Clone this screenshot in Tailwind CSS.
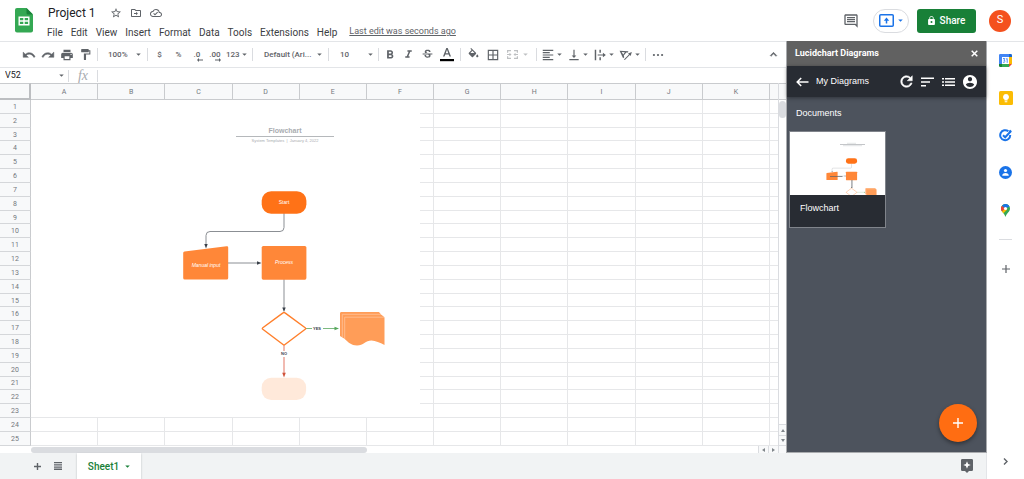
<!DOCTYPE html>
<html lang="en">
<head>
<meta charset="utf-8">
<meta name="viewport" content="width=device-width, initial-scale=1">
<title>Project 1</title>
<script src="https://cdn.jsdelivr.net/npm/@tailwindcss/browser@4"></script>
</head>
<body class="flex h-screen flex-col overflow-hidden bg-white font-['Roboto',sans-serif] text-[#3c4043]">

<svg class="hidden">
  <symbol id="caret" viewBox="0 0 6 4"><path d="M0 .5h6L3 3.5z"/></symbol>
</svg>

<header class="flex h-[42px] shrink-0 items-center border-b border-[#e3e5e8]">
  <a href="#" aria-label="Sheets home" class="ml-[15px] block">
    <svg class="h-[25px] w-[18px]" viewBox="0 0 18 25"><path fill="#34a853" d="M2 0h9.500L18 6.500V22.500a2 2 0 0 1-2 2H2a2 2 0 0 1-2-2V2a2 2 0 0 1 2-2z"/><path fill="#188038" d="M11.500 0 18 6.500h-5a1.500 1.500 0 0 1-1.500-1.500z"/><path fill="#fff" fill-rule="evenodd" d="M3.500 8.500h11v9h-11zM4.900 9.900v2.400h3.400V9.900zm4.800 0v2.400h3.400V9.900zm-4.800 3.800v2.400h3.400v-2.400zm4.800 0v2.400h3.400v-2.400z"/></svg>
  </a>
  <div class="ml-[14px] flex min-w-0 flex-1 flex-col gap-[2px] pt-[2px]">
    <div class="flex h-[19px] items-center pl-px">
      <h1 class="text-[12px] text-[#202124]">Project 1</h1>
      <button aria-label="Star" class="ml-[14px]"><svg class="size-3" viewBox="0 0 24 24" fill="#5f6368"><path d="M22 9.240l-7.190-.62L12 2 9.190 8.630 2 9.240l5.460 4.730L5.820 21 12 17.270 18.180 21l-1.630-7.030L22 9.240zM12 15.400l-3.760 2.270 1-4.280-3.320-2.880 4.380-.38L12 6.100l1.710 4.040 4.380.38-3.320 2.880 1 4.280L12 15.400z"/></svg></button>
      <button aria-label="Move" class="ml-2"><svg class="size-3" viewBox="0 0 24 24" fill="#5f6368"><path d="M20 6h-8l-2-2H4c-1.100 0-2 .9-2 2v12c0 1.100.9 2 2 2h16c1.100 0 2-.9 2-2V8c0-1.100-.9-2-2-2zm0 12H4V6h5.200l2 2H20v10zM12.200 9.500l3.600 3.500-3.600 3.500v-2.500H8v-2h4.200z"/></svg></button>
      <button aria-label="Saved to Drive" class="ml-2"><svg class="size-3" viewBox="0 0 24 24" fill="#5f6368"><path d="M19.350 10.040A7.490 7.490 0 0 0 12 4C9.110 4 6.600 5.640 5.350 8.040A5.994 5.994 0 0 0 0 14c0 3.310 2.690 6 6 6h13c2.760 0 5-2.240 5-5 0-2.640-2.050-4.780-4.650-4.960zM19 18H6c-2.210 0-4-1.790-4-4 0-2.050 1.530-3.760 3.560-3.970l1.070-.11.5-.95A5.469 5.469 0 0 1 12 6c2.620 0 4.880 1.860 5.390 4.430l.3 1.500 1.530.11A2.980 2.980 0 0 1 22 15c0 1.650-1.350 3-3 3zm-9-3.820-2.090-2.090L6.500 13.500 10 17l6.010-6.010-1.410-1.410z"/></svg></button>
    </div>
    <nav class="flex h-4 items-center gap-2 text-[10px] whitespace-nowrap">
      <button>File</button><button>Edit</button><button>View</button><button>Insert</button><button>Format</button><button>Data</button><button>Tools</button><button>Extensions</button><button>Help</button>
      <a href="#" class="ml-1 text-[9px] text-[#5f6368] underline">Last edit was seconds ago</a>
    </nav>
  </div>
  <div class="flex items-center pr-[13px]">
    <button aria-label="Comments"><svg class="size-4" viewBox="0 0 24 24" fill="#5f6368"><path d="M21.990 4c0-1.100-.89-2-1.990-2H4c-1.100 0-2 .9-2 2v12c0 1.100.9 2 2 2h14l4 4-.01-18zM20 4v13.170L18.830 16H4V4h16zM6 12h12v2H6zm0-3h12v2H6zm0-3h12v2H6z"/></svg></button>
    <button aria-label="Present" class="ml-[14px] flex h-6 w-9 items-center justify-center gap-1 rounded-full border border-[#dadce0]">
      <svg class="h-[13px] w-[15px]" viewBox="0 0 15 13" fill="none" stroke="#1a73e8" stroke-width="1.500"><rect x=".75" y=".75" width="13.500" height="11.500" rx="1"/><path d="M7.500 9.500V5.500" /><path d="M4.800 6.700 7.500 3.500l2.700 3.200z" fill="#1a73e8" stroke="none"/></svg>
      <svg class="h-[3px] w-[5px]" fill="#1a73e8"><use href="#caret"/></svg>
    </button>
    <button class="ml-2 flex h-6 w-[59px] items-center justify-center gap-[5px] rounded-[3px] bg-[#188038] text-[10px] font-medium text-white">
      <svg class="h-[9px] w-[7px]" viewBox="4 1 16 21" fill="#fff"><path d="M18 8h-1V6c0-2.760-2.240-5-5-5S7 3.240 7 6v2H6c-1.100 0-2 .9-2 2v10c0 1.100.9 2 2 2h12c1.100 0 2-.9 2-2V10c0-1.100-.9-2-2-2zm-6 9.500a2.300 2.300 0 1 1 0-4.600 2.300 2.300 0 0 1 0 4.600zM15.100 8H8.900V6a3.100 3.100 0 0 1 6.200 0z"/></svg>Share</button>
    <button aria-label="Account" class="ml-[13px] size-[22px] rounded-full bg-[#f4511e] text-[11px] text-white">S</button>
  </div>
</header>

<div class="flex min-h-0 flex-1">
  <div class="flex min-w-0 flex-1 flex-col">
    <div class="flex min-h-0 flex-1">
      <main class="flex min-w-0 flex-1 flex-col">

        <div role="toolbar" aria-label="Formatting" class="flex h-[26px] shrink-0 items-center border-b border-[#e3e5e8] pl-[19px] text-[8px] font-medium text-[#5f6368] [&_svg]:fill-[#5f6368]">
          <button aria-label="Undo" class="flex w-[19px] justify-center"><svg class="size-[14px]" viewBox="0 0 24 24"><path stroke="#5f6368" stroke-width=".8" d="M12.500 8c-2.650 0-5.050.99-6.900 2.600L2 7v9h9l-3.620-3.620c1.390-1.160 3.160-1.880 5.120-1.880 3.540 0 6.550 2.310 7.600 5.500l2.370-.78C21.080 11.030 17.150 8 12.500 8z"/></svg></button>
          <button aria-label="Redo" class="flex w-[19px] justify-center"><svg class="size-[14px]" viewBox="0 0 24 24"><path stroke="#5f6368" stroke-width=".8" d="M18.400 10.600C16.550 8.990 14.150 8 11.500 8c-4.650 0-8.580 3.030-9.960 7.220L3.900 16a8.002 8.002 0 0 1 7.600-5.500c1.950 0 3.730.72 5.120 1.880L13 16h9V7l-3.600 3.600z"/></svg></button>
          <button aria-label="Print" class="flex w-[19px] justify-center"><svg class="size-[14px]" viewBox="0 0 24 24"><path d="M19 8H5c-1.660 0-3 1.340-3 3v6h4v4h12v-4h4v-6c0-1.660-1.340-3-3-3zm-3 11H8v-5h8v5zm3-7c-.55 0-1-.45-1-1s.45-1 1-1 1 .45 1 1-.45 1-1 1zm-1-9H6v4h12V3z"/></svg></button>
          <button aria-label="Paint format" class="flex w-[19px] justify-center"><svg class="size-[13px]" viewBox="0 0 24 24"><path d="M18 4V3c0-.55-.45-1-1-1H5c-.55 0-1 .45-1 1v4c0 .55.45 1 1 1h12c.55 0 1-.45 1-1V6h1v4H9v11c0 .55.45 1 1 1h2c.55 0 1-.45 1-1v-9h8V4h-3z"/></svg></button>
          <span class="ml-[2px] h-[13px] w-px bg-[#dadce0]"></span>
          <button class="flex w-[49px] items-center justify-between pr-[6px] pl-[10px]">100%<svg class="h-[3px] w-[5px]"><use href="#caret"/></svg></button>
          <span class="h-[13px] w-px bg-[#dadce0]"></span>
          <button class="ml-[2px] w-[19px]">$</button>
          <button class="w-[19px]">%</button>
          <button aria-label="Decrease decimal places" class="relative w-[18px]">.0<svg class="absolute top-[9px] left-[9px] h-1 w-[6px]" viewBox="0 0 6 4"><path d="M0 2 2 0v1.500h4v1H2V4z"/></svg></button>
          <button aria-label="Increase decimal places" class="relative w-[18px]">.00<svg class="absolute top-[9px] left-[9px] h-1 w-[6px]" viewBox="0 0 6 4"><path d="M6 2 4 0v1.500H0v1h4V4z"/></svg></button>
          <button class="ml-[2px] flex w-[26px] items-center gap-[2px]">123<svg class="h-[3px] w-[5px]"><use href="#caret"/></svg></button>
          <span class="h-[13px] w-px bg-[#dadce0]"></span>
          <button class="flex w-[75px] items-center justify-between pr-[6px] pl-[11px] whitespace-nowrap">Default (Ari...<svg class="h-[3px] w-[5px]"><use href="#caret"/></svg></button>
          <span class="h-[13px] w-px bg-[#dadce0]"></span>
          <button class="flex w-[49px] items-center justify-between pr-[5px] pl-[11px]">10<svg class="h-[3px] w-[5px]"><use href="#caret"/></svg></button>
          <span class="h-[13px] w-px bg-[#dadce0]"></span>
          <button aria-label="Bold" class="ml-px flex w-[19px] justify-center"><svg class="size-[14px]" viewBox="0 0 24 24"><path d="M15.600 10.790c.97-.67 1.650-1.770 1.650-2.790 0-2.260-1.750-4-4-4H7v14h7.040c2.090 0 3.710-1.700 3.710-3.790 0-1.520-.86-2.820-2.150-3.420zM10 6.500h3c.83 0 1.500.67 1.500 1.500s-.67 1.500-1.500 1.500h-3v-3zm3.500 9H10v-3h3.500c.83 0 1.500.67 1.500 1.500s-.67 1.500-1.500 1.500z"/></svg></button>
          <button aria-label="Italic" class="flex w-[19px] justify-center"><svg class="size-[13px]" viewBox="0 0 24 24"><path d="M10 4v3h2.210l-3.420 8H6v3h8v-3h-2.210l3.420-8H18V4z"/></svg></button>
          <button aria-label="Strikethrough" class="flex w-[19px] justify-center"><svg class="size-[13px]" viewBox="0 0 24 24"><path d="M7.240 8.750c-.26-.48-.39-1.030-.39-1.670 0-.61.13-1.160.4-1.670.26-.5.630-.93 1.110-1.290.48-.35 1.050-.63 1.700-.83.66-.19 1.390-.29 2.180-.29.81 0 1.540.11 2.210.34.66.22 1.230.54 1.690.94.47.4.83.88 1.080 1.430s.38 1.150.38 1.810h-3.010c0-.31-.05-.59-.15-.85-.09-.27-.24-.49-.44-.68-.2-.19-.45-.33-.75-.44-.3-.1-.66-.16-1.060-.16-.39 0-.74.04-1.030.13s-.53.21-.72.36c-.19.16-.34.34-.44.55-.1.210-.15.43-.15.66 0 .48.25.88.74 1.210.38.250.770.480 1.410.7H7.390c-.05-.08-.11-.17-.15-.25zM21 12v-2H3v2h9.620c.18.070.4.140.55.200.37.170.66.340.87.510s.35.360.43.570c.07.200.11.430.11.690 0 .23-.05.450-.14.660-.09.200-.23.380-.42.530-.19.150-.42.260-.71.350-.29.080-.63.130-1.010.13-.43 0-.83-.04-1.180-.13s-.66-.23-.91-.42c-.25-.19-.45-.44-.59-.75s-.25-.76-.25-1.210H6.400c0 .55.080 1.130.24 1.580s.37.850.65 1.210c.28.350.6.660.98.920.37.260.780.480 1.220.650.440.170.900.300 1.380.390.480.080.960.130 1.440.130.800 0 1.530-.09 2.180-.28s1.210-.45 1.670-.79c.46-.34.820-.77 1.070-1.270s.38-1.070.38-1.710c0-.6-.1-1.140-.31-1.610-.05-.11-.11-.23-.17-.33H21z"/></svg></button>
          <button aria-label="Text color" class="flex w-[19px] justify-center"><svg class="h-[15px] w-[14px]" viewBox="0 0 14 15"><path d="M6.300 1h1.400l3.300 8.500H9.500L8.700 7.400H5.300L4.500 9.500H3zM5.750 6.200h2.500L7 2.700z"/><path fill="#000" d="M0 12h14v2.200H0z"/></svg></button>
          <span class="ml-1 h-[13px] w-px bg-[#dadce0]"></span>
          <button aria-label="Fill color" class="ml-[2px] flex w-5 justify-center"><svg class="size-[13px]" viewBox="0 0 24 24"><path d="M16.560 8.940 7.620 0 6.210 1.410l2.380 2.380-5.150 5.150c-.59.590-.59 1.540 0 2.120l5.500 5.500c.29.290.68.440 1.060.440s.77-.15 1.060-.44l5.500-5.500c.59-.58.590-1.530 0-2.120zM19 11.500s-2 2.170-2 3.500c0 1.100.9 2 2 2s2-.9 2-2c0-1.330-2-3.500-2-3.500zM6.300 9 10 5.300 13.700 9z" fill-rule="evenodd"/></svg></button>
          <button aria-label="Borders" class="flex w-5 justify-center"><svg class="size-[14px]" viewBox="0 0 24 24"><path d="M3 3v18h18V3H3zm8 16H5v-6h6v6zm0-8H5V5h6v6zm8 8h-6v-6h6v6zm0-8h-6V5h6v6z"/></svg></button>
          <button aria-label="Merge cells" disabled class="flex w-[32px] items-center gap-[4px] pl-[3px] opacity-40"><svg class="h-[11px] w-[13px]" viewBox="0 0 13 11"><path d="M1 1h4v1.200H2.200v1.500H1zM8 1h4v2.700h-1.200V2.200H8zM1 7.300h1.200v1.500H5V10H1zM10.800 7.300H12V10H8V8.800h2.800zM1 5h2.500V3.700L5.500 5.500l-2 1.800V6H1zM12 5H9.500V3.700L7.500 5.500l2 1.800V6H12z"/></svg><svg class="h-[3px] w-[5px]"><use href="#caret"/></svg></button>
          <span class="ml-px h-[13px] w-px bg-[#dadce0]"></span>
          <button aria-label="Horizontal align" class="ml-1 flex w-[26px] items-center gap-[2px]"><svg class="size-[14px]" viewBox="0 0 24 24"><path d="M15 15H3v2h12v-2zm0-8H3v2h12V7zM3 13h18v-2H3v2zm0 8h18v-2H3v2zM3 3v2h18V3H3z"/></svg><svg class="h-[3px] w-[5px]"><use href="#caret"/></svg></button>
          <button aria-label="Vertical align" class="flex w-[26px] items-center gap-[2px]"><svg class="size-[14px]" viewBox="0 0 24 24"><path d="M16 13h-3V3h-2v10H8l4 4 4-4zM4 19v2h16v-2H4z"/></svg><svg class="h-[3px] w-[5px]"><use href="#caret"/></svg></button>
          <button aria-label="Text wrapping" class="flex w-[26px] items-center gap-[2px]"><svg class="size-[14px]" viewBox="0 0 24 24"><path d="M3 3h2.500v18H3zM11 3h2.500v5H11zM11 16h2.500v5H11zM8 11h9V8l5 4-5 4v-3H8z"/></svg><svg class="h-[3px] w-[5px]"><use href="#caret"/></svg></button>
          <button aria-label="Text rotation" class="flex w-[26px] items-center gap-[2px]"><svg class="size-[14px]" viewBox="0 0 24 24"><path fill-rule="evenodd" d="M1 4.500 16 5.500 15.500 7.700 12.500 7.500 8.200 13 9 16 7 17.500zM4.500 7 7.300 11 10 7.400zM8.500 19.500l8.500-8.500-1.500-1.500L22 7l-2 6.500-1.500-1.300-8.500 8.500z"/></svg><svg class="h-[3px] w-[5px]"><use href="#caret"/></svg></button>
          <span class="h-[13px] w-px bg-[#dadce0]"></span>
          <button aria-label="More" class="ml-[5px]"><svg class="size-[14px]" viewBox="0 0 24 24"><circle cx="5" cy="12" r="1.900"/><circle cx="12" cy="12" r="1.900"/><circle cx="19" cy="12" r="1.900"/></svg></button>
          <button aria-label="Hide the menus" class="mr-[6px] ml-auto"><svg class="size-[13px]" viewBox="0 0 24 24"><path d="M12 8l-6 6 1.410 1.410L12 10.830l4.590 4.580L18 14z" stroke="#5f6368"/></svg></button>
        </div>

        <div class="flex h-[15px] shrink-0 items-center">
          <input aria-label="Name box" value="V52" class="w-[54px] pl-[5px] text-[9px] text-[#202124] outline-none">
          <button aria-label="Named ranges" class="ml-[5px]"><svg class="h-[3px] w-[5px]" fill="#5f6368"><use href="#caret"/></svg></button>
          <span class="ml-1 h-3 w-px bg-[#dadce0]"></span>
          <label for="formula" class="w-[28px] text-center font-['Liberation_Serif',serif] text-[14px] leading-3 text-[#a8abaf] italic">fx</label>
          <span class="h-3 w-px bg-[#dadce0]"></span>
          <input id="formula" class="h-full min-w-0 flex-1 px-1 text-[9px] outline-none">
        </div>

        <div class="flex min-h-0 flex-1">
          <div class="flex min-w-0 flex-1 flex-col">
            <div class="relative min-h-0 flex-1">
              <table class="h-full w-full table-fixed border-separate border-spacing-0 text-[7px] leading-none text-[#73777c]">
                <thead><tr id="columns" class="h-[17px]"><th class="w-[31px] border-t border-r-2 border-b-2 border-t-[#c9cbce] border-r-[#bcbec1] border-b-[#bcbec1] bg-[#f8f9fa] p-0"></th></tr></thead>
                <tbody id="rows"></tbody>
              </table>
              <svg class="absolute top-[17px] left-[31px] h-[317px] w-[389px] font-['Liberation_Sans',sans-serif]" viewBox="31 100 389 317" role="img" aria-label="Flowchart">
                <rect x="31" y="100" width="389" height="317" fill="#fff"/>
                <text x="285" y="133" font-size="7" font-weight="700" text-anchor="middle" fill="#a9acb0">Flowchart</text>
                <path d="M236 136.500h98" stroke="#b5b8bb"/>
                <text x="285" y="142" font-size="4" text-anchor="middle" fill="#a9acb0" xml:space="preserve">System Templates  |  January 4, 2022</text>
                <g id="flow">
                  <g fill="none" stroke="#8b8f94">
                    <path d="M284 213v14.500a4 4 0 0 1-4 4h-70a4 4 0 0 0-4 4V246"/>
                    <path d="M228 263h31M284 279v30"/>
                    <path d="M306 328.500h30" stroke="#7cba80"/>
                    <path d="M284 345v30" stroke="#eda397" stroke-width="1.500"/>
                  </g>
                  <path fill="#3a414a" d="M204.300 244h3.400L206 248.500zM257 261.300l4.500 1.700-4.500 1.700zM282.300 307.500h3.400L284 312z"/>
                  <path fill="#54a65a" d="M334.500 326.800l4.500 1.700-4.500 1.700z"/>
                  <path fill="#d0533a" d="M282.200 372.800h3.600L284 377.500z"/>
                  <rect x="261.700" y="191.300" width="44.700" height="22.400" rx="9.500" fill="#ff7217"/>
                  <path fill="#ff8738" d="M184.500 251.500l42-5.200a1.400 1.400 0 0 1 1.700 1.400V278a1.600 1.600 0 0 1-1.600 1.600H184.800a1.600 1.600 0 0 1-1.600-1.600V253a1.500 1.500 0 0 1 1.300-1.500z"/>
                  <rect x="261.700" y="246" width="44.700" height="33.700" rx="1.600" fill="#ff8738"/>
                  <path d="M283 312.900q1-.8 2 0l20.200 14.800q1 .8 0 1.600L285 344.500q-1 .8-2 0l-20.200-15.200q-1-.8 0-1.600z" fill="#fff" stroke="#ff7f2b" stroke-width="1.400"/>
                  <g fill="#ff9d58" stroke="#ffc9a3" stroke-width=".7">
                    <path stroke="none" d="M341 312h38l2 2.500 2 1.500 1.500 1.500V345q-7-4-13-4.600c-6 0-8 5-14.500 5-6 0-8-2.500-12.500-6.600l-4.500-2.800V313.500q0-1.500 1-1.500z"/>
                    <path fill="none" d="M342.300 337v-22.700h38.500M344.700 339v-21.800h39.500"/>
                  </g>
                  <rect x="261.700" y="377.700" width="44.400" height="22.300" rx="9.500" fill="#ffe9da"/>
                </g>
                <path fill="#fff" d="M312 326h11v5h-11zM279 351h10v6h-10z"/>
                <g text-anchor="middle" font-size="5">
                  <text x="284" y="204" fill="#fff">Start</text>
                  <g fill="#fff" font-style="italic"><text x="206" y="267">Manual input</text><text x="284" y="264">Process</text></g>
                  <g fill="#3a414a" font-weight="700" font-size="4"><text x="317" y="330">YES</text><text x="284" y="355">NO</text></g>
                </g>
              </svg>
            </div>
            <div class="flex h-[7px] shrink-0 items-center bg-white pl-[31px]">
              <div class="h-[6px] w-[336px] rounded-full bg-[#dadce0]"></div>
              <button aria-label="Scroll left" class="ml-auto flex h-full w-[10px] items-center justify-center border-l border-[#dadce0] bg-[#f8f9fa]"><svg class="h-1 w-[3px]" viewBox="0 0 3 4" fill="#80868b"><path d="M3 0v4L0 2z"/></svg></button>
              <button aria-label="Scroll right" class="flex h-full w-[10px] items-center justify-center border-l border-[#dadce0] bg-[#f8f9fa]"><svg class="h-1 w-[3px]" viewBox="0 0 3 4" fill="#80868b"><path d="M0 0v4l3-2z"/></svg></button>
            </div>
          </div>
          <div class="flex w-2 shrink-0 flex-col border-l border-[#dadce0]">
            <div class="h-[17px] border-y border-[#c9cbce] bg-[#f8f9fa]"></div>
            <div class="mt-px h-[17px] rounded-full bg-[#dadce0]"></div>
            <button aria-label="Scroll up" class="mt-auto flex h-[11px] items-center justify-center border-t border-[#dadce0] bg-[#f8f9fa]"><svg class="h-[3px] w-1" viewBox="0 0 4 3" fill="#80868b"><path d="M0 3h4L2 0z"/></svg></button>
            <button aria-label="Scroll down" class="flex h-[11px] items-center justify-center border-y border-[#dadce0] bg-[#f8f9fa]"><svg class="h-[3px] w-1" viewBox="0 0 4 3" fill="#80868b"><path d="M0 0h4L2 3z"/></svg></button>
            <div class="h-[7px] bg-[#f8f9fa]"></div>
          </div>
        </div>
      </main>

      <aside class="-mt-px flex w-[201px] shrink-0 flex-col border-x border-b border-[#a9abae] bg-[#4d535d] font-['Liberation_Sans',sans-serif] text-[9px] text-white">
        <div class="flex h-[25px] shrink-0 items-center justify-between bg-[#616161] pr-2 pl-2">
          <h2 class="font-['Roboto',sans-serif] font-bold">Lucidchart Diagrams</h2>
          <button aria-label="Close"><svg class="size-[7px]" viewBox="0 0 7 7" stroke="#fff" stroke-width="1.500"><path d="M.7.7l5.600 5.600M6.300.7.700 6.300"/></svg></button>
        </div>
        <div class="flex h-[31px] shrink-0 items-center bg-[#282c33] pr-[9px] pl-[9px] shadow-[0_1px_4px_rgba(0,0,0,0.4)]">
          <button aria-label="Back"><svg class="h-[10px] w-[13px]" viewBox="0 0 13 10" fill="none" stroke="#fff" stroke-width="1.500"><path d="M12.500 5H1.500M5.200 1 1.200 5l4 4"/></svg></button>
          <span class="ml-[7px]">My Diagrams</span>
          <div class="ml-auto flex items-center gap-2 [&_svg]:fill-white">
            <button aria-label="Refresh"><svg class="size-[13px]" viewBox="3 3 18 18"><path stroke="#fff" stroke-width=".7" d="M17.650 6.350A7.958 7.958 0 0 0 12 4c-4.420 0-7.990 3.580-7.990 8s3.570 8 7.990 8c3.730 0 6.840-2.550 7.730-6h-2.080A5.990 5.990 0 0 1 12 18c-3.310 0-6-2.690-6-6s2.690-6 6-6c1.660 0 3.140.69 4.220 1.780L13 11h7V4z"/></svg></button>
            <button aria-label="Sort"><svg class="h-[10px] w-[13px]" viewBox="0 0 13 10"><path d="M0 .5h13v1.600H0zM0 4.200h9v1.600H0zM0 7.900h5v1.600H0z"/></svg></button>
            <button aria-label="List view"><svg class="h-[8px] w-[13px]" viewBox="0 0 13 8"><path d="M0 0h2v1.500H0zM3 0h10v1.500H3zM0 3.200h2v1.500H0zM3 3.200h10v1.500H3zM0 6.400h2V8H0zM3 6.400h10V8H3z"/></svg></button>
            <button aria-label="Profile"><svg class="size-[14px]" viewBox="2 2 20 20"><path d="M12 2C6.480 2 2 6.480 2 12s4.480 10 10 10 10-4.480 10-10S17.520 2 12 2zm0 3c1.660 0 3 1.340 3 3s-1.340 3-3 3-3-1.340-3-3 1.340-3 3-3zm0 14.200a7.200 7.200 0 0 1-6-3.220c.03-1.990 4-3.080 6-3.080 1.990 0 5.970 1.090 6 3.080a7.200 7.200 0 0 1-6 3.220z"/></svg></button>
          </div>
        </div>
        <h3 class="mt-[9px] pl-[9px] leading-[14px]">Documents</h3>
        <a href="#" class="mt-[11px] ml-[2px] block w-[97px] border border-[#80848b] bg-[#282c33]">
          <svg class="block h-[63px] w-full bg-white" viewBox="0 0 95 63">
            <path d="M50 12.500h25" stroke="#b5b8bb" stroke-width=".8"/><path d="M57 11.300h9M53 13.700h19" stroke="#cfd1d3" stroke-width=".6"/>
            <use href="#flow" transform="translate(-9.200 -21.500) scale(.249)"/>
            <path d="M40 44.500h12.500M62 48v8" stroke="#5c6168" stroke-width=".7"/>
          </svg>
          <span class="block h-8 pt-[7px] pl-[10px] leading-[12px]">Flowchart</span>
        </a>
        <button aria-label="New document" class="mt-auto mr-[9px] mb-[10px] flex size-[38px] items-center justify-center self-end rounded-full bg-[#ff6d12] shadow-[0_2px_4px_rgba(0,0,0,0.4)]"><svg class="size-[10px]" viewBox="0 0 10 10" stroke="#fff" stroke-width="1.400"><path d="M5 0v10M0 5h10"/></svg></button>
      </aside>
    </div>

    <footer class="flex h-[26px] shrink-0 items-center border-r border-[#e3e5e8] bg-[#f1f3f4]">
      <button aria-label="Add sheet" class="ml-[34px]"><svg class="size-[7px]" viewBox="0 0 7 7" stroke="#5f6368" stroke-width="1.400"><path d="M3.500 0v7M0 3.500h7"/></svg></button>
      <button aria-label="All sheets" class="ml-[13px]"><svg class="size-2" viewBox="0 0 8 8" fill="#5f6368"><path d="M0 0h8v1.300H0zM0 2.200h8v1.300H0zM0 4.400h8v1.300H0zM0 6.600h8v1.300H0z"/></svg></button>
      <button class="ml-[15px] flex h-full w-16 items-center justify-center gap-[6px] bg-white text-[10px] font-medium text-[#188038] shadow-[0_1px_2px_rgba(60,64,67,0.3)]">Sheet1<svg class="h-[3px] w-[5px]" fill="#188038"><use href="#caret"/></svg></button>
      <button aria-label="Explore" class="mr-[13px] ml-auto"><svg class="h-[14px] w-3" viewBox="0 0 12 14"><path fill="#5f6368" d="M1.300 0h9.400A1.300 1.300 0 0 1 12 1.300v9.400a1.300 1.300 0 0 1-1.300 1.300H8l-2 2-2-2H1.300A1.300 1.300 0 0 1 0 10.700V1.300A1.300 1.300 0 0 1 1.300 0z"/><path fill="#fff" d="M6 2.200 7.100 4.900 9.800 6 7.100 7.100 6 9.800 4.900 7.100 2.200 6l2.700-1.100z"/></svg></button>
    </footer>
  </div>

  <nav aria-label="Side panel" class="flex w-[37px] shrink-0 flex-col items-center pt-3">
    <a href="#" aria-label="Calendar"><svg class="size-[13px]" viewBox="0 0 13 13"><path fill="#4285f4" d="M1.200 0H10v3H3v7H0V1.200A1.200 1.200 0 0 1 1.200 0z"/><path fill="#1967d2" d="M10 0h1.800A1.200 1.200 0 0 1 13 1.200V3h-3z"/><path fill="#fbbc04" d="M10 3h3v7h-3z"/><path fill="#34a853" d="M3 10h7v3H3z"/><path fill="#188038" d="M0 10h3v3H1.200A1.200 1.200 0 0 1 0 11.800z"/><path fill="#ea4335" d="M10 10h3l-3 3z"/><path fill="#fff" d="M3 3h7v7H3z"/><path fill="none" stroke="#4285f4" stroke-width=".9" d="M4 4.500h1.800L4.900 6.300q1.300 0 1.100 1.200Q5.400 8.700 4 8.200M7 5.200l1.200-.7v4.300"/></svg></a>
    <a href="#" aria-label="Keep" class="mt-6"><svg class="size-[14px]" viewBox="0 0 14 14"><rect width="14" height="14" rx="1.500" fill="#fbbc04"/><path fill="#fff" d="M7 3a3 3 0 0 1 1.500 5.600v1H5.500v-1A3 3 0 0 1 7 3zM5.700 10.200h2.600v1H5.700z"/></svg></a>
    <a href="#" aria-label="Tasks" class="mt-6"><svg class="size-[13px]" viewBox="0 0 13 13" fill="none" stroke="#1a73e8"><path stroke-width="2" d="M9.400 2.300A5 5 0 1 0 11.200 6"/><path stroke-width="2" d="M4 6.200 6.200 8.300 11.800 2.200"/><circle cx="11.300" cy="2.300" r=".9" fill="#1a73e8"/></svg></a>
    <a href="#" aria-label="Contacts" class="mt-6"><svg class="size-[13px]" viewBox="0 0 13 13"><circle cx="6.500" cy="6.500" r="6.500" fill="#1a73e8"/><circle cx="6.500" cy="4.500" r="1.600" fill="#fff"/><path fill="#fff" d="M3.300 9.200c0-1.400 2-2.200 3.200-2.200s3.200.8 3.200 2.200v.5H3.300z"/></svg></a>
    <a href="#" aria-label="Maps" class="mt-[25px]"><svg class="h-[13px] w-[9px]" viewBox="0 0 9 13"><path fill="#34a853" d="M4.500 0A4.500 4.500 0 0 1 9 4.500C9 8 5.500 9 4.500 13 3.500 9 0 8 0 4.500A4.500 4.500 0 0 1 4.500 0z"/><path fill="#fbbc04" d="M.9 7.300 4.500 3 6 5.800 2.400 9.200z"/><path fill="#ea4335" d="M1 1.700 4.500 4.500.9 7.300A4.600 4.600 0 0 1 1 1.700z"/><path fill="#1a73e8" d="M1 1.700A4.500 4.500 0 0 1 8.500 2.500L4.500 4.500z"/><circle cx="4.500" cy="4.500" r="1.600" fill="#fff"/></svg></a>
    <span class="mt-[22px] h-px w-[13px] bg-[#dadce0]"></span>
    <button aria-label="Get add-ons" class="mt-[25px]"><svg class="size-2" viewBox="0 0 8 8" stroke="#5f6368" stroke-width="1.200"><path d="M4 0v8M0 4h8"/></svg></button>
    <button aria-label="Hide side panel" class="mt-auto mb-[14px]"><svg class="h-[7px] w-[5px]" viewBox="0 0 5 7" fill="none" stroke="#5f6368" stroke-width="1.400"><path d="M1 .6 4 3.500 1 6.400"/></svg></button>
  </nav>
</div>

<script>
  const letters = [...'ABCDEFGHIJK'];
  const head = letters.map(l => `<th scope="col" class="border-y border-r border-[#c9cbce] bg-[#f8f9fa] p-0 pt-px font-normal">${l}</th>`).join('');
  document.getElementById('columns').insertAdjacentHTML('beforeend', head + '<th class="w-[8px] border-y border-[#c9cbce] bg-[#f8f9fa] p-0"></th>');
  const cells = letters.map(() => '<td class="border-r border-b border-[#e6e7e9] p-0"></td>').join('') + '<td class="border-b border-[#e6e7e9] p-0"></td>';
  document.getElementById('rows').innerHTML = Array.from({length: 25}, (_, i) =>
    `<tr><th scope="row" class="border-r border-b border-r-[#c9cbce] border-b-[#d5d7da] bg-[#f8f9fa] p-0 pt-[2px] font-normal">${i + 1}</th>${cells}</tr>`).join('');
</script>
</body>
</html>
